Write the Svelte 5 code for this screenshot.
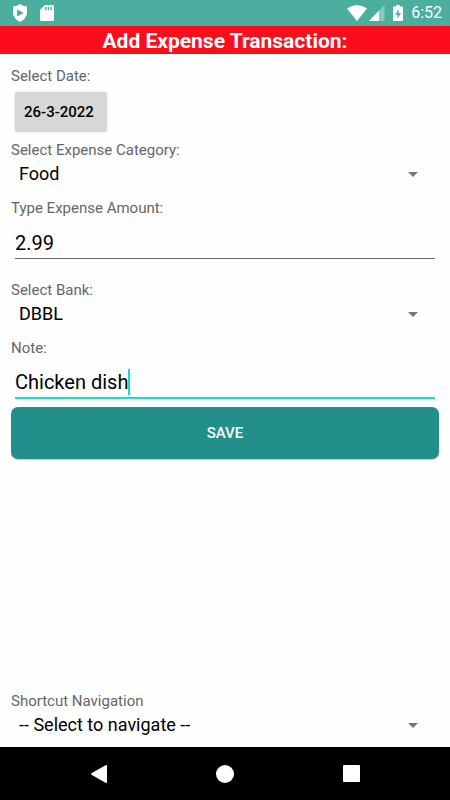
<script>
  let date = $state("26-3-2022");
  let category = $state("Food");
  let amount = $state("2.99");
  let bank = $state("DBBL");
  let note = $state("Chicken dish");
  let shortcut = $state("-- Select to navigate --");

  const categories = ["Food", "Transport", "Shopping", "Bills"];
  const banks = ["DBBL", "Cash"];
  const shortcuts = ["-- Select to navigate --", "Home", "Add Income", "Reports"];

  function save(e) {
    e.preventDefault();
  }
</script>

{#snippet arrow()}
  <svg class="arrow" viewBox="0 0 10 5" aria-hidden="true">
    <path d="M0 0h10L5 5z" />
  </svg>
{/snippet}

<div class="screen">
  <header class="status">
    <div class="icons">
      <svg width="16" height="18" viewBox="0 0 16 18" aria-hidden="true">
        <path fill="#fff" d="M8 0Q11 2.200 15 2.600V8.500Q15 14.500 8 18Q1 14.500 1 8.500V2.600Q5 2.200 8 0z" />
        <path fill="#4cae9f" d="M5 5.500L11.800 9L5 12.500z" />
      </svg>
      <svg width="14" height="16" viewBox="0 0 14 16" aria-hidden="true">
        <path fill="#fff" d="M5 0h7.500Q14 0 14 1.500v13Q14 16 12.500 16h-11Q0 16 0 14.500V5z" />
        <path stroke="#4cae9f" stroke-width="1.400" d="M5.700 2v3.200M8.400 2v3.200M11.100 2v3.200" />
      </svg>
    </div>
    <div class="icons right">
      <svg width="20" height="16" viewBox="0 0 20 16" aria-hidden="true">
        <path fill="#fff" d="M0 3.500Q10-3.500 20 3.500L10 16z" />
      </svg>
      <svg width="16" height="16" viewBox="0 0 16 16" aria-hidden="true">
        <path fill="#fff" fill-opacity=".35" d="M15.500 0v16H0z" />
        <path fill="#fff" d="M10 5.600V16H0z" />
      </svg>
      <svg class="battery" width="10" height="16" viewBox="0 0 10 16" aria-hidden="true">
        <path fill="#fff" d="M3 0h4v1.500h2q1 0 1 1V15q0 1-1 1H1q-1 0-1-1V2.500q0-1 1-1h2z" />
        <path fill="#4cae9f" d="M6 4L2 9.700h2.500V13.500L8 8H5.500z" />
      </svg>
      <span class="clock">6:52</span>
    </div>
  </header>

  <h1>Add Expense Transaction:</h1>

  <form onsubmit={save}>
    <label for="date">Select Date:</label>
    <button id="date" class="date" type="button">{date}</button>

    <label for="category">Select Expense Category:</label>
    <div class="spinner">
      <select id="category" bind:value={category}>
        {#each categories as item}
          <option>{item}</option>
        {/each}
      </select>
      {@render arrow()}
    </div>

    <label for="amount">Type Expense Amount:</label>
    <div class="field amount">
      <input id="amount" type="text" inputmode="decimal" bind:value={amount} />
    </div>

    <label for="bank">Select Bank:</label>
    <div class="spinner">
      <select id="bank" bind:value={bank}>
        {#each banks as item}
          <option>{item}</option>
        {/each}
      </select>
      {@render arrow()}
    </div>

    <label for="note">Note:</label>
    <div class="field active">
      <input id="note" type="text" bind:value={note} />
      <span class="caret"></span>
    </div>

    <button class="save" type="submit">SAVE</button>
  </form>

  <div class="shortcut">
    <label for="shortcut">Shortcut Navigation</label>
    <div class="spinner">
      <select id="shortcut" bind:value={shortcut}>
        {#each shortcuts as item}
          <option>{item}</option>
        {/each}
      </select>
      {@render arrow()}
    </div>
  </div>

  <nav>
    <button aria-label="Back">
      <svg width="18" height="20" viewBox="0 0 18 20"><path d="M15.500 1.200Q17 .5 17 2v16q0 1.500-1.500.8L1.500 10.800q-1-.8 0-1.600z" /></svg>
    </button>
    <button aria-label="Home">
      <svg width="18" height="18" viewBox="0 0 18 18"><circle cx="9" cy="9" r="9" /></svg>
    </button>
    <button aria-label="Recent apps">
      <svg width="17" height="17" viewBox="0 0 17 17"><rect width="17" height="17" rx="1" /></svg>
    </button>
  </nav>
</div>

<style>
  :global(body) {
    margin: 0;
    background: #fefefe;
  }

  .screen {
    display: flex;
    flex-direction: column;
    min-height: 100vh;
    font-family: Roboto, sans-serif;
    color: #000;
  }

  button, input, select {
    margin: 0;
    padding: 0;
    border: 0;
    background: none;
    color: inherit;
    font-family: inherit;
    outline: none;
  }

  .status {
    display: flex;
    justify-content: space-between;
    align-items: center;
    height: 26px;
    padding: 0 8px 0 12px;
    background: #4cae9f;
  }

  .icons {
    display: flex;
    align-items: center;
    gap: 12px;
  }

  .right {
    gap: 2px;
  }

  .battery {
    margin: 0 6px;
  }

  .clock {
    color: #fff;
    font-size: 16px;
    line-height: 26px;
  }

  h1 {
    margin: 0;
    padding-top: 2px;
    background: #fc0d1b;
    color: #fff;
    font-size: 21px;
    font-weight: 700;
    line-height: 26px;
    text-align: center;
  }

  form {
    display: flex;
    flex-direction: column;
    flex: 1;
    padding: 12px 11px;
  }

  label {
    color: #666;
    font-size: 15px;
    line-height: 20px;
  }

  .date {
    align-self: flex-start;
    margin: 6px 4px 8px;
    padding: 0 13px 0 9px;
    border-radius: 2px;
    background: #d6d8d7;
    box-shadow: 0 0 2px rgba(0, 0, 0, 0.2);
    font-size: 15px;
    font-weight: 500;
    line-height: 40px;
  }

  .spinner {
    display: flex;
    align-items: center;
    height: 28px;
    margin-bottom: 10px;
    padding: 0 21px 0 8px;
  }

  select {
    appearance: none;
    flex: 1;
    font-size: 18px;
    line-height: 28px;
  }

  .arrow {
    width: 10px;
    height: 5px;
    fill: #757575;
    pointer-events: none;
  }

  .field {
    display: flex;
    align-items: center;
    height: 30px;
    margin: 10px 4px 8px;
    border-bottom: 1px solid #6b6b6b;
  }

  .field input {
    flex: 1;
    min-width: 0;
    font-size: 20px;
    line-height: 28px;
  }

  .amount {
    margin-bottom: 21px;
  }

  .active {
    margin-top: 9px;
    border-bottom: 2px solid #16dcc8;
  }

  .active input {
    flex: none;
    field-sizing: content;
  }

  .caret {
    width: 2px;
    height: 26px;
    background: #16dcc8;
  }

  .save {
    border-radius: 7px;
    background: #238f8b;
    box-shadow: 0 1px 1px rgba(0, 0, 0, 0.2);
    color: #fff;
    font-size: 15px;
    font-weight: 500;
    line-height: 52px;
  }

  .shortcut {
    display: flex;
    flex-direction: column;
    padding: 0 11px;
  }

  .shortcut .spinner {
    margin-bottom: 8px;
  }

  nav {
    display: flex;
    justify-content: center;
    align-items: center;
    height: 53px;
    background: #000;
  }

  nav button {
    display: flex;
    justify-content: center;
    width: 28%;
  }

  nav svg {
    fill: #fff;
  }
</style>
